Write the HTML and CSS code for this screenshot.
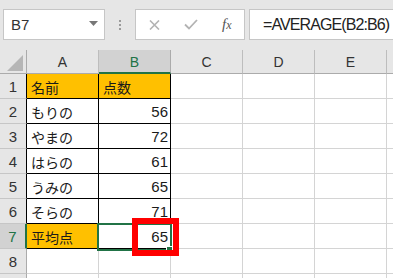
FILE: index.html
```html
<!DOCTYPE html>
<html lang="ja">
<head>
<meta charset="utf-8">
<title>Excel</title>
<link rel="stylesheet" href="styles.css">
</head>
<body>
<div class="toolbar">
  <div class="namebox">
    <span class="nb-text">B7</span>
    <svg class="nb-arrow" width="9" height="5" viewBox="0 0 9 5"><path d="M0 0H9L4.5 5Z" fill="#777"/></svg>
  </div>
  <div class="dots"><i></i><i></i><i></i></div>
  <div class="fnbox">
    <svg class="ic-x" width="11" height="10" viewBox="0 0 11 10"><path d="M1 0.5L10 9.5M10 0.5L1 9.5" stroke="#b3b3b3" stroke-width="1.6" fill="none"/></svg>
    <svg class="ic-ok" width="14" height="11" viewBox="0 0 14 11"><path d="M1 5.5L5 9.5L13 1" stroke="#b3b3b3" stroke-width="1.8" fill="none"/></svg>
    <span class="fx"><span class="f">f</span><span class="x">x</span></span>
  </div>
  <div class="formula">=AVERAGE(B2:B6)</div>
</div>

<div class="sheet">
  <div class="corner"><span class="tri"></span></div>
  <div class="colh">A</div>
  <div class="colh sel">B</div>
  <div class="colh">C</div>
  <div class="colh">D</div>
  <div class="colh">E</div>
  <div class="colh rest"></div>

  <div class="rowh tb">1</div>
  <div class="c tbl hdr">名前</div>
  <div class="c tbl hdr">点数</div>
  <div class="c"></div><div class="c"></div><div class="c"></div><div class="c"></div>

  <div class="rowh tb">2</div>
  <div class="c tbl">もりの</div>
  <div class="c tbl num">56</div>
  <div class="c"></div><div class="c"></div><div class="c"></div><div class="c"></div>

  <div class="rowh tb">3</div>
  <div class="c tbl">やまの</div>
  <div class="c tbl num">72</div>
  <div class="c"></div><div class="c"></div><div class="c"></div><div class="c"></div>

  <div class="rowh tb">4</div>
  <div class="c tbl">はらの</div>
  <div class="c tbl num">61</div>
  <div class="c"></div><div class="c"></div><div class="c"></div><div class="c"></div>

  <div class="rowh tb">5</div>
  <div class="c tbl">うみの</div>
  <div class="c tbl num">65</div>
  <div class="c"></div><div class="c"></div><div class="c"></div><div class="c"></div>

  <div class="rowh tb">6</div>
  <div class="c tbl">そらの</div>
  <div class="c tbl num">71</div>
  <div class="c"></div><div class="c"></div><div class="c"></div><div class="c"></div>

  <div class="rowh sel">7</div>
  <div class="c tbl hdr">平均点</div>
  <div class="c tbl num">65</div>
  <div class="c"></div><div class="c"></div><div class="c"></div><div class="c"></div>

  <div class="rowh">8</div>
  <div class="c"></div><div class="c"></div><div class="c"></div><div class="c"></div><div class="c"></div><div class="c"></div>

  <div class="rowh part"></div>
  <div class="c part"></div><div class="c part"></div><div class="c part"></div><div class="c part"></div><div class="c part"></div><div class="c part"></div>

  <div class="selection"><span class="handle"></span></div>
  <div class="mark"></div>
</div>
</body>
</html>
```

FILE: styles.css
```css
* { box-sizing: border-box; }
html, body { margin: 0; padding: 0; background: #fff; overflow: hidden; }
body {
  width: 393px;
  height: 278px;
  font-family: "Liberation Sans", "Noto Sans CJK JP", sans-serif;
  color: #222;
}

/* ---------- formula bar ---------- */
.toolbar {
  height: 50px;
  background: #e6e6e6;
  display: flex;
  align-items: flex-start;
  padding: 9px 0 0 3px;
}
.namebox {
  width: 102px;
  height: 31px;
  background: #fff;
  border: 1px solid #c6c6c6;
  display: flex;
  align-items: center;
  justify-content: space-between;
  padding: 0 6px 0 7px;
}
.nb-text { font-size: 15px; color: #333; }
.nb-arrow { margin-top: -2px; }
.dots {
  width: 30px;
  height: 31px;
  display: flex;
  flex-direction: column;
  align-items: center;
  justify-content: center;
  gap: 2px;
}
.dots i { display: block; width: 2px; height: 2px; background: #9a9a9a; }
.fnbox {
  width: 110px;
  height: 31px;
  background: #fff;
  border: 1px solid #c6c6c6;
  display: flex;
  align-items: center;
  padding-left: 13px;
}
.ic-x { margin-top: 1px; }
.ic-ok { margin-left: 24px; }
.fx {
  margin-left: 24px;
  font-family: "Liberation Serif", serif;
  font-style: italic;
  color: #555;
  font-size: 15px;
  margin-top: -1px;
}
.fx .x { font-size: 12px; }
.formula {
  margin-left: 4px;
  flex: 1;
  min-width: 0;
  height: 31px;
  background: #fff;
  border: 1px solid #c6c6c6;
  border-right: 0;
  font-size: 16px;
  letter-spacing: -0.9px;
  color: #222;
  padding-left: 13px;
  line-height: 29px;
  white-space: nowrap;
  overflow: hidden;
}

/* ---------- sheet grid ---------- */
.sheet {
  position: relative;
  width: 393px;
  display: grid;
  grid-template-columns: 27px 72px 72px 72px 72px 72px 1fr;
  grid-template-rows: 24px repeat(8, 25px) 4px;
}
.corner {
  background: #e6e6e6;
  border-right: 1px solid #ababab;
  border-bottom: 1px solid #ababab;
  position: relative;
}
.tri {
  position: absolute;
  right: 3px;
  bottom: 2px;
  width: 0;
  height: 0;
  border-left: 16px solid transparent;
  border-bottom: 16px solid #b6b6b6;
}
.colh {
  background: #e6e6e6;
  border-right: 1px solid #bdbdbd;
  border-bottom: 1px solid #ababab;
  font-size: 14px;
  color: #333;
  display: flex;
  align-items: center;
  justify-content: center;
  padding-top: 1px;
}
.colh.sel {
  background: #d2d2d2;
  color: #217346;
  border-bottom: 2px solid #217346;
  border-right-color: #ababab;
}
.colh.rest { border-right: 0; }
.rowh {
  background: #e6e6e6;
  border-right: 1px solid #ababab;
  border-bottom: 1px solid #c6c6c6;
  font-size: 15px;
  color: #333;
  display: flex;
  align-items: center;
  justify-content: center;
  padding-top: 1px;
}
.rowh.tb { border-right-color: #000; }
.rowh.sel {
  background: #d2d2d2;
  color: #217346;
  border-right: 2px solid #217346;
}
.c {
  border-right: 1px solid #d4d4d4;
  border-bottom: 1px solid #d4d4d4;
  font-size: 14px;
  color: #1a1a1a;
  display: flex;
  align-items: center;
  padding: 1px 2px 0 4px;
  white-space: nowrap;
}
.part { border-bottom: 0; padding: 0; }
.c.tbl {
  border-right-color: #000;
  border-bottom-color: #000;
}
.c.hdr { background: #ffc000; }
.c.num { justify-content: flex-end; font-size: 15px; }

/* selection of B7 (overlay) */
.selection {
  position: absolute;
  left: 97px;
  top: 173px;
  width: 75px;
  height: 28px;
  border: 2px solid #217346;
  pointer-events: none;
}
.handle {
  position: absolute;
  right: -3px;
  bottom: -4px;
  width: 7px;
  height: 7px;
  background: #217346;
  border: 1px solid #fff;
}

/* red annotation rectangle */
.mark {
  position: absolute;
  left: 132px;
  top: 168px;
  width: 47px;
  height: 38px;
  border: 6px solid #ff0000;
  pointer-events: none;
}
```
